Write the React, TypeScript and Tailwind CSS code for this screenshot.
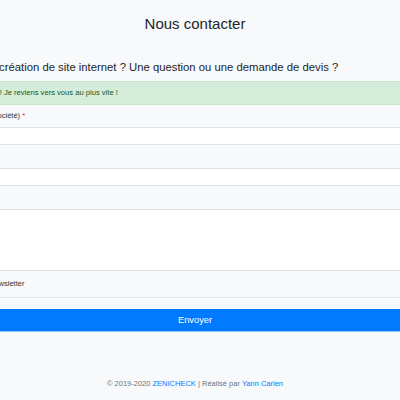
import React from "react";

export default function App() {
  return (
    <div className="min-h-screen overflow-hidden bg-[#f8f9fa] font-['Liberation_Sans',Arial,sans-serif] text-[#212529]">
      <div className="-ml-[119px] w-[628px]">
        <h1 className="pt-[15px] text-center text-[15px] leading-[18px] font-normal">
          Nous contacter
        </h1>
        <h2 className="mt-[27px] text-[11.3px] leading-[14px] font-normal">
          Vous avez un projet de création de site internet ? Une question ou une demande de devis ?
        </h2>

        <form className="mt-[7px] px-[82px]" onSubmit={(e) => e.preventDefault()}>
          <div className="flex h-[24px] items-center border border-[#c3e6cb] bg-[#d4edda] px-[15px] text-[7.6px] text-[#155724]">
            Merci ! Je reviens vers vous au plus vite !
          </div>

          <label className="flex h-[22px] items-center text-[7.5px] text-[#333]">
            Nom (ou société)&nbsp;<span className="text-[#dc3545]">*</span>
          </label>
          <input className="block h-[18px] w-full border border-[#dee2e6] bg-white px-2 text-[7.5px] outline-none" />

          <label className="flex h-[23px] items-center text-[7.5px] text-[#333]">
            Email&nbsp;<span className="text-[#dc3545]">*</span>
          </label>
          <input type="email" className="block h-[18px] w-full border border-[#dee2e6] bg-white px-2 text-[7.5px] outline-none" />

          <label className="flex h-[23px] items-center text-[7.5px] text-[#333]">
            Message&nbsp;<span className="text-[#dc3545]">*</span>
          </label>
          <textarea className="block h-[62px] w-full resize-none border border-[#dee2e6] bg-white px-2 text-[7.5px] outline-none" />

          <label className="flex h-[27px] items-center gap-[4px] border-b border-[#e4e7ea] pl-[14px] text-[7.5px] text-[#333]">
            <input type="checkbox" className="h-[8px] w-[8px]" />
            Newsletter
          </label>

          <button
            type="submit"
            className="mt-[11px] block h-[23px] w-full border-b border-[#8ec4ff] bg-[#007bff] pt-[2px] text-[9.3px] text-white"
          >
            Envoyer
          </button>
        </form>

        <footer className="mt-[47px] text-center text-[7.5px] leading-[10px] text-[#6c757d]">
          © 2019-2020 <a href="#" className="text-[#007bff]">ZENICHECK</a> | Réalisé par{" "}
          <a href="#" className="text-[#007bff]">Yann Carlen</a>
        </footer>
      </div>
    </div>
  );
}
